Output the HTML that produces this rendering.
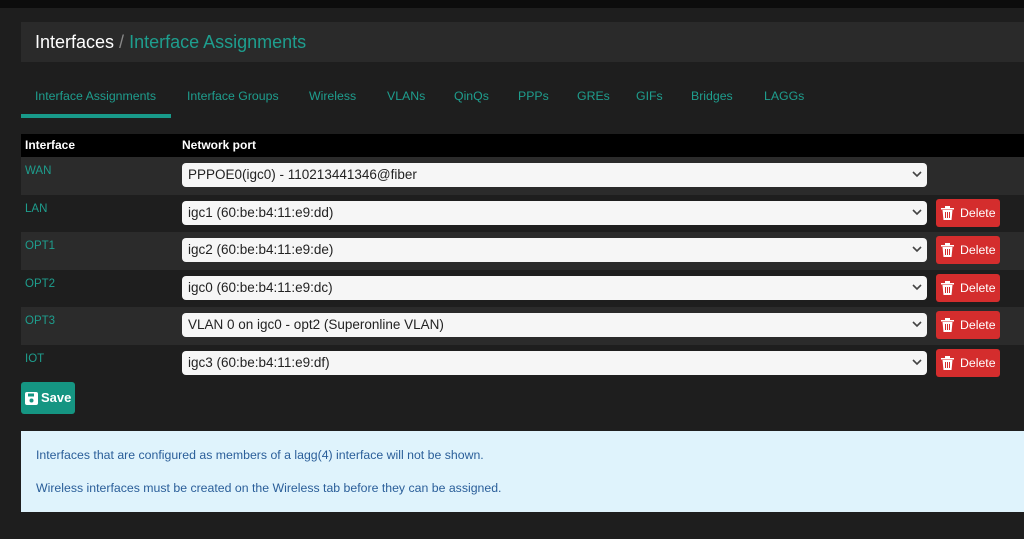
<!DOCTYPE html>
<html><head><style>
*{box-sizing:border-box;margin:0;padding:0}
body{width:1024px;height:539px;background:#1e1e1e;font-family:"Liberation Sans",sans-serif;position:relative;overflow:hidden}
.top{position:absolute;left:0;top:0;width:1024px;height:8px;background:#0c0c0c}
.hdr{position:absolute;left:21px;top:22px;width:1003px;height:40px;background:#2a2a2a;padding-left:14px;line-height:40px;font-size:18px;color:#fff}
.hdr span{color:#1e9e8e}
.hdr i{color:#888;font-style:normal}
.tabs{position:absolute;left:21px;top:75px;height:43px;font-size:12.3px;color:#1e9e8e}
.tabs div{position:absolute;top:0;height:43px;line-height:42px;white-space:nowrap}
.tabs .act{border-bottom:4px solid #189a8a;background:#1e1e1e}
.th{position:absolute;left:21px;top:134px;width:1003px;height:23px;background:#000;color:#fff;font-weight:bold;font-size:12px;line-height:23px}
.row{position:absolute;left:21px;width:1003px;height:38px}
.row .n{position:absolute;left:4px;top:8px;font-size:11.5px;color:#1e9e8e}
.sel{position:absolute;left:161px;top:6px;width:745px;height:24px;background:#f6f6f6;border-radius:4px;font-size:13.5px;color:#222;line-height:24px;padding-left:6px}
.sel svg{position:absolute;right:5px;top:8px}
.del{position:absolute;left:915px;top:4px;width:64px;height:28px;background:#d42d2d;border-radius:3px;color:#fff;font-size:12.3px;line-height:28px;padding-left:24px}
.del svg{position:absolute;left:5px;top:7px}
.save{position:absolute;left:21px;top:382px;width:54px;height:32px;background:#159582;border-radius:3px;color:#fff;font-weight:bold;font-size:13px;line-height:32px;padding-left:20px}
.save svg{position:absolute;left:4px;top:10px}
.info{position:absolute;left:21px;top:431px;width:1003px;height:81px;background:#dff3fc;color:#2a5e99;font-size:12.3px;padding:17px 0 0 15px;line-height:15px}
.info p{margin-bottom:18px}
</style></head><body>
<div class="top"></div>
<div class="hdr">Interfaces <i>/</i> <span>Interface Assignments</span></div>
<div class="tabs">
<div class="act" style="left:0;width:150px;padding-left:14px">Interface Assignments</div>
<div style="left:166px">Interface Groups</div>
<div style="left:288px">Wireless</div>
<div style="left:366px">VLANs</div>
<div style="left:433px">QinQs</div>
<div style="left:497px">PPPs</div>
<div style="left:556px">GREs</div>
<div style="left:615px">GIFs</div>
<div style="left:670px">Bridges</div>
<div style="left:743px">LAGGs</div>
</div>
<div class="th"><span style="position:absolute;left:4px">Interface</span><span style="position:absolute;left:161px">Network port</span></div>

<div class="row" style="top:157px;background:#2b2b2b"><div class="n">WAN</div><div class="sel">PPPOE0(igc0) - 110213441346@fiber<svg width="10" height="7"><path d="M1 1l4 4 4-4" stroke="#444" stroke-width="1.6" fill="none"/></svg></div></div>
<div class="row" style="top:195px;background:#1e1e1e"><div class="n">LAN</div><div class="sel">igc1 (60:be:b4:11:e9:dd)<svg width="10" height="7"><path d="M1 1l4 4 4-4" stroke="#444" stroke-width="1.6" fill="none"/></svg></div><div class="del"><svg width="13" height="14"><path d="M0 2h13v1.5H0zM4 0h5v2H4zM1.5 4h10l-1 10h-8z" fill="#fff"/><path d="M4.5 6v6M6.5 6v6M8.5 6v6" stroke="#d42d2d" stroke-width="1"/></svg>Delete</div></div>
<div class="row" style="top:232px;background:#2b2b2b"><div class="n">OPT1</div><div class="sel">igc2 (60:be:b4:11:e9:de)<svg width="10" height="7"><path d="M1 1l4 4 4-4" stroke="#444" stroke-width="1.6" fill="none"/></svg></div><div class="del"><svg width="13" height="14"><path d="M0 2h13v1.5H0zM4 0h5v2H4zM1.5 4h10l-1 10h-8z" fill="#fff"/><path d="M4.5 6v6M6.5 6v6M8.5 6v6" stroke="#d42d2d" stroke-width="1"/></svg>Delete</div></div>
<div class="row" style="top:270px;background:#1e1e1e"><div class="n">OPT2</div><div class="sel">igc0 (60:be:b4:11:e9:dc)<svg width="10" height="7"><path d="M1 1l4 4 4-4" stroke="#444" stroke-width="1.6" fill="none"/></svg></div><div class="del"><svg width="13" height="14"><path d="M0 2h13v1.5H0zM4 0h5v2H4zM1.5 4h10l-1 10h-8z" fill="#fff"/><path d="M4.5 6v6M6.5 6v6M8.5 6v6" stroke="#d42d2d" stroke-width="1"/></svg>Delete</div></div>
<div class="row" style="top:307px;background:#2b2b2b"><div class="n">OPT3</div><div class="sel">VLAN 0 on igc0 - opt2 (Superonline VLAN)<svg width="10" height="7"><path d="M1 1l4 4 4-4" stroke="#444" stroke-width="1.6" fill="none"/></svg></div><div class="del"><svg width="13" height="14"><path d="M0 2h13v1.5H0zM4 0h5v2H4zM1.5 4h10l-1 10h-8z" fill="#fff"/><path d="M4.5 6v6M6.5 6v6M8.5 6v6" stroke="#d42d2d" stroke-width="1"/></svg>Delete</div></div>
<div class="row" style="top:345px;background:#1e1e1e"><div class="n">IOT</div><div class="sel">igc3 (60:be:b4:11:e9:df)<svg width="10" height="7"><path d="M1 1l4 4 4-4" stroke="#444" stroke-width="1.6" fill="none"/></svg></div><div class="del"><svg width="13" height="14"><path d="M0 2h13v1.5H0zM4 0h5v2H4zM1.5 4h10l-1 10h-8z" fill="#fff"/><path d="M4.5 6v6M6.5 6v6M8.5 6v6" stroke="#d42d2d" stroke-width="1"/></svg>Delete</div></div>

<div class="save"><svg width="13" height="13"><rect x="0" y="0" width="13" height="13" rx="2" fill="#fff"/><rect x="3" y="1.5" width="6" height="3" fill="#159582"/><circle cx="6.5" cy="8.5" r="2" fill="#159582"/></svg>Save</div>
<div class="info"><p>Interfaces that are configured as members of a lagg(4) interface will not be shown.</p><p>Wireless interfaces must be created on the Wireless tab before they can be assigned.</p></div>
</body></html>
